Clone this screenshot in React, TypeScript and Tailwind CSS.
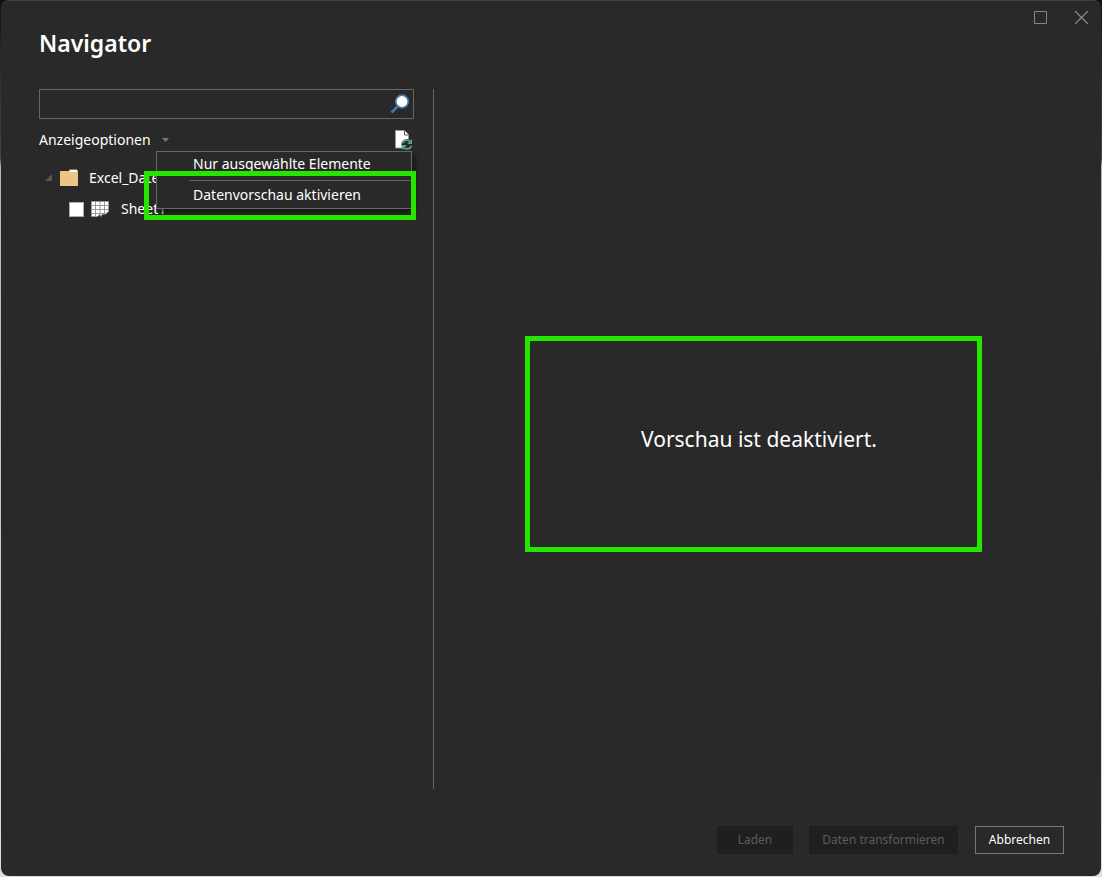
import React from "react";

function SearchIcon() {
  return (
    <svg width="20" height="20" viewBox="0 0 20 20" fill="none">
      <path d="M1.500 18.500 L7.500 12.500" stroke="#4576a9" strokeWidth="2.600" />
      <circle cx="12" cy="7.500" r="6.300" fill="#fff" stroke="#4576a9" strokeWidth="1.700" />
    </svg>
  );
}

function RefreshPageIcon() {
  return (
    <svg width="18" height="20" viewBox="0 0 18 20" fill="none">
      <path d="M.5.5h9l4 4v13.500H.5z" fill="#fff" stroke="#999" />
      <path d="M9.500.500v4.500h4" fill="#fff" stroke="#555" />
      <circle cx="12" cy="14.500" r="5.600" fill="#292929" />
      <path d="M7.600 13.200c1.200-3.600 5.500-4 7.900-1.500M16.400 15.800c-1.200 3.600-5.500 4-7.900 1.500" stroke="#5f9e88" strokeWidth="1.900" />
      <path d="M17 9v5h-5zM7 20v-5h5z" fill="#5f9e88" />
    </svg>
  );
}

function FolderIcon() {
  return (
    <svg width="20" height="18" viewBox="0 0 20 18">
      <path d="M1 2h8.500L11 .5h7L19 2v15H1z" fill="#ebc586" />
      <path d="M11.500 1h6v2h-7z" fill="#fff" />
    </svg>
  );
}

function SheetIcon() {
  return (
    <svg width="18" height="16" viewBox="0 0 18 16">
      <path d="M.5.5h17v10l-3 2.500h-3l-1.500 2.500-1.500-2-2 2H.5z" fill="#fff" stroke="#999" />
      <path d="M1 4.500h16M1 8.500h16M1 12.500h13M4.500 1v14M9 1v13M13.500 1v12" stroke="#999" />
    </svg>
  );
}

export default function App() {
  return (
    <div className="min-h-screen bg-[linear-gradient(#111,#333_10%,#444_18%,#b5b5b5_19%,#ddd)] px-px pb-px font-['Noto_Sans',sans-serif] text-sm text-white">
      <div className="flex min-h-[calc(100vh-1px)] flex-col rounded-lg border-t border-[#414141] bg-[#292929]">
        <header className="flex items-start justify-between pr-[13px] pl-[38px]">
          <h1 className="pt-[26px] text-[23px] leading-8 font-semibold">Navigator</h1>
          <div className="flex gap-7 pt-[10px]">
            <button aria-label="Maximieren">
              <svg width="13" height="13" fill="none" stroke="#858585"><path d="M.5.5h12v12H.5z" /></svg>
            </button>
            <button aria-label="Schließen">
              <svg width="13" height="13" fill="none" stroke="#858585" strokeWidth="1.300"><path d="M0 0l13 13M13 0L0 13" /></svg>
            </button>
          </div>
        </header>

        <main className="flex flex-1 pt-[30px] pr-[37px] pl-[38px]">
          <section className="w-[395px] shrink-0 border-r border-[#666] pr-[19px]">
            <label className="flex h-[30px] items-center border border-[#666] pr-[3px] pl-2">
              <input type="search" aria-label="Suchen" className="min-w-0 flex-1 bg-transparent outline-none" />
              <SearchIcon />
            </label>

            <div className="relative flex h-[42px] items-center justify-between">
              <button className="flex items-center gap-[11px]">
                Anzeigeoptionen
                <svg width="7" height="4"><path d="M0 0h7L3.500 4z" fill="#777" /></svg>
              </button>
              <button aria-label="Aktualisieren" className="pr-px"><RefreshPageIcon /></button>

              <div role="menu" className="absolute top-8 right-[2px] z-10 w-64 border border-[#666] bg-[#292929] shadow-[4px_4px_3px_#11111199]">
                <button role="menuitem" className="block h-7 w-full pl-9 text-left leading-6"><span className="block h-7 leading-6">Nur ausgewählte Elemente</span></button>
                <div className="ml-8 h-px bg-[#666]" />
                <button role="menuitem" className="block h-[27px] w-full pl-9 text-left leading-7">Datenvorschau aktivieren</button>
                <div className="pointer-events-none absolute top-[19px] -right-[5px] -left-[13px] h-[49px] border-5 border-[#26e600]" />
              </div>
            </div>

            <ul>
              <li className="flex h-[34px] items-center pl-[6px]">
                <svg width="8" height="8"><path d="M7 0v7H0z" fill="#555" /></svg>
                <span className="ml-[6px]"><FolderIcon /></span>
                <span className="ml-[10px]">Excel_Daten</span>
              </li>
              <li className="flex h-7 items-center pl-[30px]">
                <input id="sheet" type="checkbox" className="size-[15px] appearance-none border border-[#aaa] bg-white" />
                <label htmlFor="sheet" className="flex items-center gap-3 pl-[7px]"><SheetIcon />Sheet1</label>
              </li>
            </ul>
          </section>

          <section className="flex flex-1 items-center justify-center pl-5">
            <div className="relative text-[21px] leading-8">
              Vorschau ist deaktiviert.
              <div className="pointer-events-none absolute -top-[87px] -right-[105px] -bottom-[97px] -left-[116px] border-5 border-[#26e600]" />
            </div>
          </section>
        </main>

        <footer className="flex h-[87px] items-start justify-end pt-[37px] pr-[37px] text-xs">
          <button disabled className="mr-4 h-7 w-[76px] bg-[#1f1f1f] text-[#5c5c5c]">Laden</button>
          <button disabled className="mr-[17px] h-7 w-[149px] bg-[#1f1f1f] text-[#5c5c5c]">Daten transformieren</button>
          <button className="h-7 w-[89px] border border-[#777]">Abbrechen</button>
        </footer>
      </div>
    </div>
  );
}
